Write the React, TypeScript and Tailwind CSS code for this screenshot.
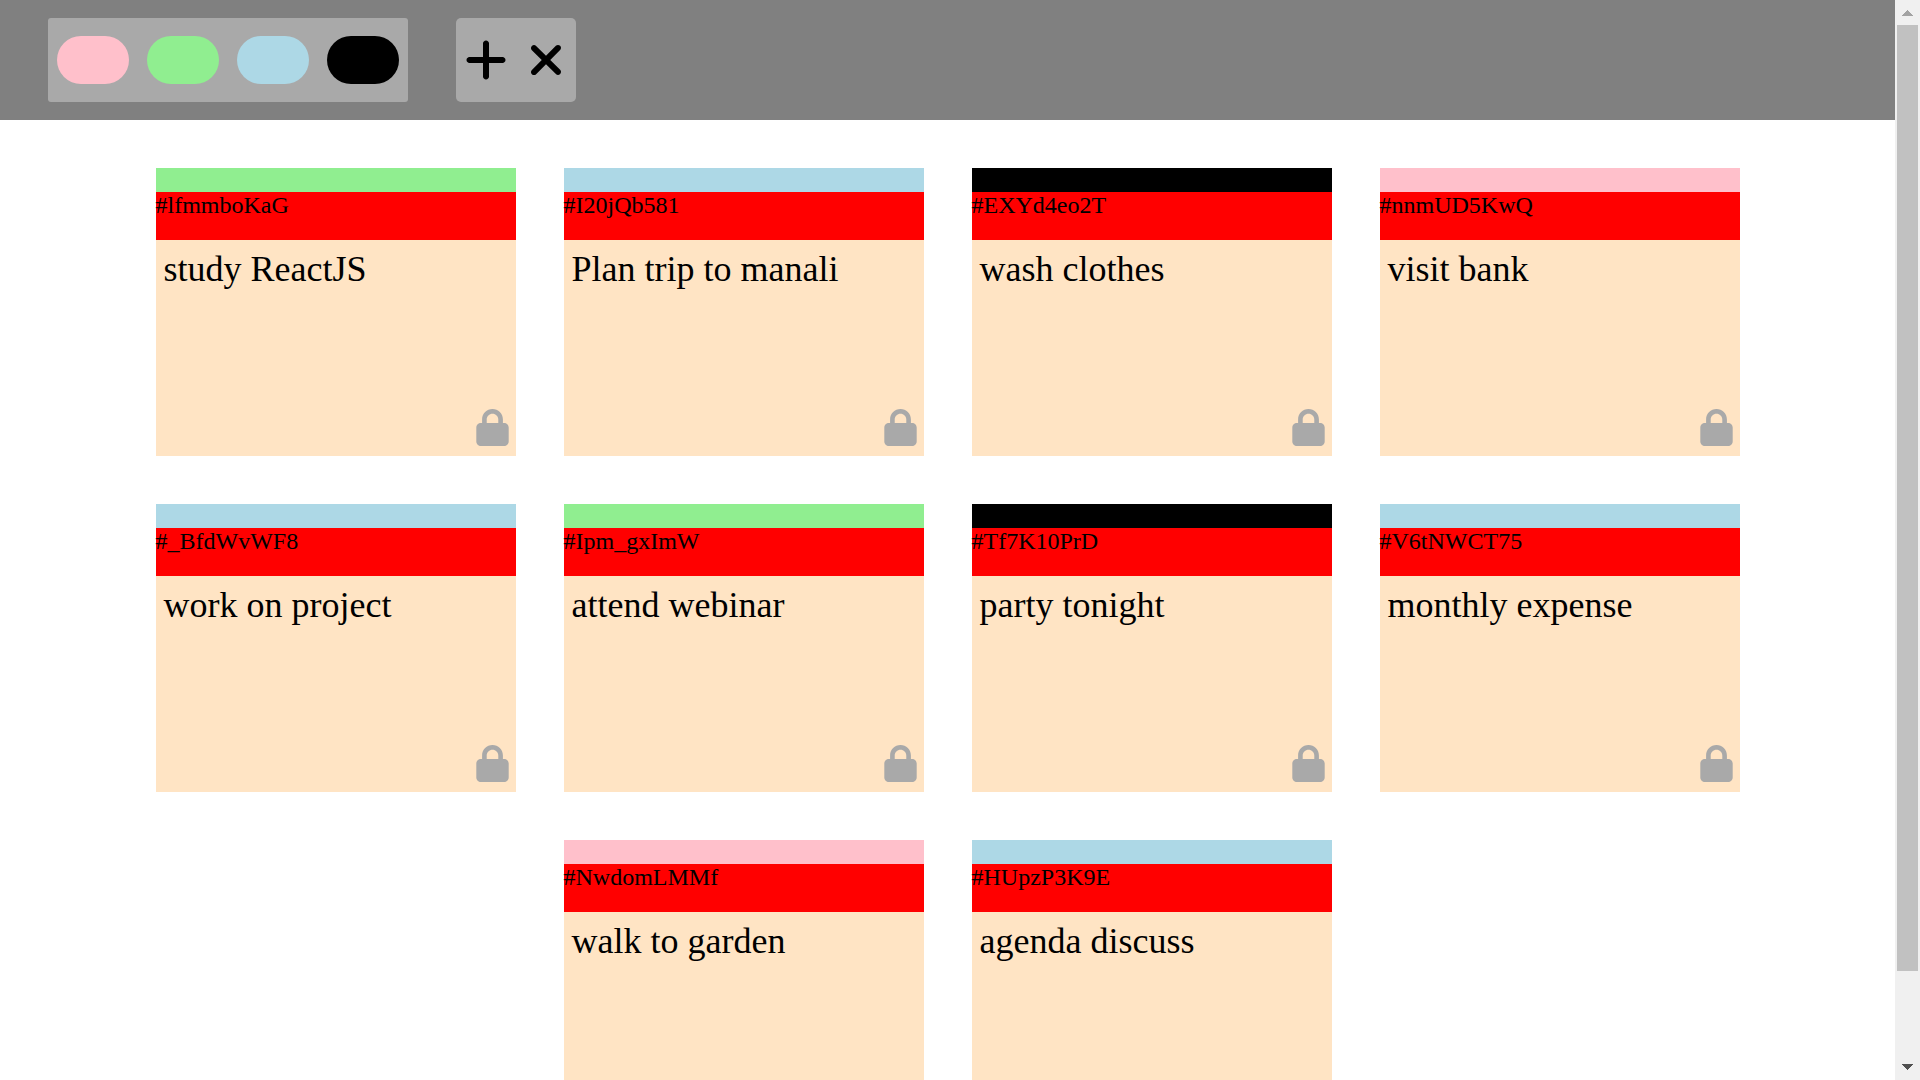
import { FaLock, FaPlus, FaXmark } from "react-icons/fa6";

const filters = [
  { name: "pink", color: "bg-[#ffc0cb]" },
  { name: "light green", color: "bg-[#90ee90]" },
  { name: "light blue", color: "bg-[#add8e6]" },
  { name: "black", color: "bg-black" },
];

const tickets = [
  { id: "#lfmmboKaG", task: "study ReactJS", color: "bg-[#90ee90]" },
  { id: "#I20jQb581", task: "Plan trip to manali", color: "bg-[#add8e6]" },
  { id: "#EXYd4eo2T", task: "wash clothes", color: "bg-black" },
  { id: "#nnmUD5KwQ", task: "visit bank", color: "bg-[#ffc0cb]" },
  { id: "#_BfdWvWF8", task: "work on project", color: "bg-[#add8e6]" },
  { id: "#Ipm_gxImW", task: "attend webinar", color: "bg-[#90ee90]" },
  { id: "#Tf7K10PrD", task: "party tonight", color: "bg-black" },
  { id: "#V6tNWCT75", task: "monthly expense", color: "bg-[#add8e6]" },
  { id: "#NwdomLMMf", task: "walk to garden", color: "bg-[#ffc0cb]" },
  { id: "#HUpzP3K9E", task: "agenda discuss", color: "bg-[#add8e6]" },
];

function Toolbar() {
  return (
    <header className="flex h-30 items-center gap-12 bg-[#808080] px-12">
      <div className="flex h-21 items-center gap-[18px] rounded-[3px] bg-[#a9a9a9] px-[9px]">
        {filters.map((f) => (
          <button
            key={f.name}
            type="button"
            aria-label={`Filter ${f.name}`}
            className={`h-12 w-18 rounded-full ${f.color}`}
          />
        ))}
      </div>
      <div className="flex h-21 items-center rounded-[5px] bg-[#a9a9a9] text-black">
        <button type="button" aria-label="Add ticket" className="flex w-15 justify-center">
          <FaPlus size={48} />
        </button>
        <button type="button" aria-label="Remove tickets" className="flex w-15 justify-center">
          <FaXmark size={48} />
        </button>
      </div>
    </header>
  );
}

function Ticket({ id, task, color }: { id: string; task: string; color: string }) {
  return (
    <article className="flex h-72 w-90 flex-col bg-[#ffe4c4]">
      <div className={`h-6 shrink-0 ${color}`} />
      <div className="h-12 shrink-0 bg-[#ff0000] text-2xl leading-[27px]">{id}</div>
      <p className="px-2 pt-[9px] text-4xl leading-[41px]">{task}</p>
      <button
        type="button"
        aria-label={`Unlock ${task}`}
        className="mt-auto mr-[5px] mb-[10px] self-end text-[#a9a9a9]"
      >
        <FaLock size={37} />
      </button>
    </article>
  );
}

function ScrollTrack() {
  return (
    <div aria-hidden="true" className="flex w-[25px] shrink-0 flex-col items-center bg-[#f0f0f0]">
      <svg width="25" height="25" viewBox="0 0 25 25" shapeRendering="crispEdges">
        <path d="M7 16h11l-5.500 -6z" fill="#a3a3a3" />
      </svg>
      <div className="flex w-[21px] flex-1 flex-col">
        <div className="basis-[91.8%] bg-[#c1c1c1]" />
      </div>
      <svg width="25" height="25" viewBox="0 0 25 25" shapeRendering="crispEdges">
        <path d="M7 9h11l-5.500 6z" fill="#505050" />
      </svg>
    </div>
  );
}

export default function App() {
  return (
    <div className="flex h-screen overflow-hidden bg-white font-['Liberation_Serif',serif] text-black">
      <div className="min-w-0 flex-1 overflow-hidden">
        <Toolbar />
        <main className="flex flex-wrap justify-center gap-12 py-12">
          {tickets.map((t) => (
            <Ticket key={t.id} {...t} />
          ))}
        </main>
      </div>
      <ScrollTrack />
    </div>
  );
}
